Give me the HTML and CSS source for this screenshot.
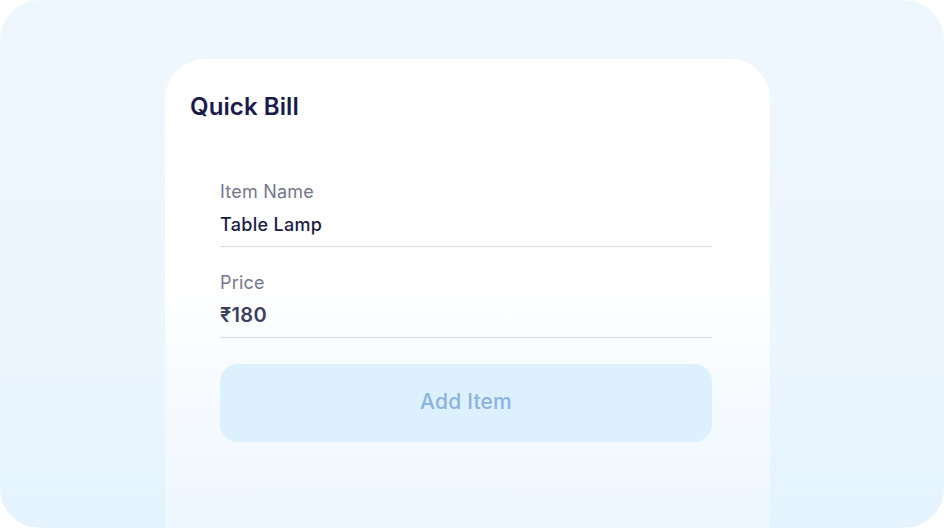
FILE: index.html
```html
<!DOCTYPE html>
<html lang="en">
<head>
    <meta charset="UTF-8">
    <meta name="viewport" content="width=device-width, initial-scale=1.0">
    <title>Quick Bill</title>
    <link rel="stylesheet" href="styles.css">
</head>
<body>

<div class="frame">
    <div class="card">
        <h2 class="title">Quick Bill</h2>

        <form class="bill-form">
            <div class="field">
                <label class="field-label">Item Name</label>
                <div class="field-value">Table Lamp</div>
            </div>

            <div class="field field-price">
                <label class="field-label">Price</label>
                <div class="field-value price">₹180</div>
            </div>

            <button type="button" class="add-btn">Add Item</button>
        </form>
    </div>
</div>

</body>
</html>
```

FILE: styles.css
```css
* {
    box-sizing: border-box;
}
body {
    margin: 0;
    background: #ffffff;
    font-family: Inter, "Noto Sans", sans-serif;
}
.frame {
    width: 944px;
    height: 528px;
    border-radius: 40px;
    overflow: hidden;
    background: linear-gradient(180deg, #eff7fe 0%, #ecf6fe 60%, #e4f3fe 100%);
    padding: 59px 0 0 165px;
}
.card {
    width: 605px;
    height: 520px;
    border-radius: 40px;
    background: linear-gradient(180deg, #ffffff 0%, #ffffff 42%, #f4f9fe 72%, #e9f5fe 100%);
    padding: 33px 0 0 25px;
}
.title {
    margin: 0;
    font-size: 24px;
    line-height: 30px;
    font-weight: 600;
    color: #1b1b4b;
    letter-spacing: 0.1px;
}
.bill-form {
    width: 492px;
    margin: 59px 0 0 30px;
}
.field {
    border-bottom: 1px solid #d9dde3;
    padding-bottom: 10px;
}
.field-price {
    margin-top: 25px;
}
.field-label {
    display: block;
    font-size: 18px;
    line-height: 22px;
    color: #77788f;
    letter-spacing: 0.2px;
}
.field-value {
    margin-top: 11px;
    font-size: 18px;
    line-height: 22px;
    font-weight: 500;
    color: #1c1c48;
    letter-spacing: 0.3px;
}
.field-value.price {
    margin-top: 9px;
    font-size: 20px;
    line-height: 24px;
    font-weight: 600;
    color: #3c3e63;
}
.add-btn {
    display: block;
    width: 100%;
    height: 78px;
    margin-top: 26px;
    padding: 0 0 3px;
    border: none;
    border-radius: 18px;
    background: #ddf0fe;
    color: #8ab3e0;
    font-family: inherit;
    font-size: 21px;
    font-weight: 500;
    letter-spacing: 0.2px;
    cursor: pointer;
}
```
